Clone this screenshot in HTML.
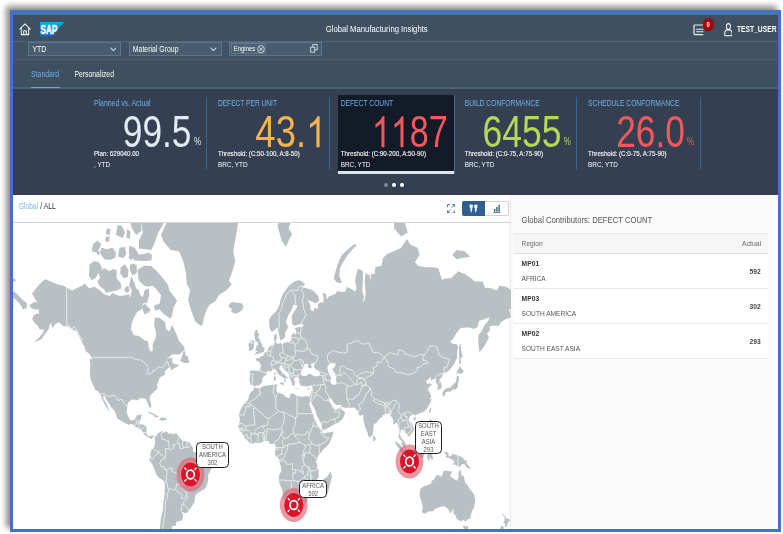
<!DOCTYPE html>
<html><head><meta charset="utf-8"><title>Global Manufacturing Insights</title>
<style>
html,body{margin:0;padding:0;background:#fff;}
body{width:783px;height:534px;overflow:hidden;position:relative;font-family:"Liberation Sans",sans-serif;}
.t{position:absolute;white-space:nowrap;line-height:1;}
.r{position:absolute;display:block;}
#sh{position:absolute;left:10px;top:10px;width:771px;height:522px;background:#fff;box-shadow:-4px -4px 6px rgba(0,0,0,.45);}
#clip{position:absolute;left:13px;top:13px;width:765px;height:516px;overflow:hidden;background:#fff;}
#in{position:absolute;left:-13px;top:-13px;width:783px;height:534px;}
#fr{position:absolute;left:10px;top:10px;width:765px;height:516px;border:3px solid #4472c4;}
</style></head><body>
<div id="sh"></div>
<div id="clip"><div id="in">
<div class="r" style="left:13px;top:13px;width:765px;height:2.2px;background:#3f7aab;"></div>
<div class="r" style="left:13px;top:15.2px;width:765px;height:26.3px;background:#3f5161;"></div>
<div class="r" style="left:13px;top:41px;width:765px;height:19.5px;background:#405263;"></div>
<div class="r" style="left:13px;top:41px;width:765px;height:0.8px;background:#52677a;"></div>
<div class="r" style="left:13px;top:59.4px;width:765px;height:0.8px;background:#455a6c;"></div>
<div class="r" style="left:13px;top:60.5px;width:765px;height:27px;background:#3e4f5f;"></div>
<div class="r" style="left:13px;top:86.7px;width:765px;height:2.0px;background:#4b6177;"></div>
<div class="r" style="left:13px;top:88.7px;width:765px;height:106.0px;background:#353f52;"></div>
<div class="r" style="left:510.7px;top:194.7px;width:268px;height:335px;background:#fafafa;box-shadow:-1px 0 2px rgba(0,0,0,.10);"></div>
<svg class="r" style="left:18.6px;top:23.3px" width="12" height="12.5" viewBox="0 0 12 12.5"><path d="M0.8 6.2 L6 0.9 L11.2 6.2 M2.3 5.2 V11.6 H9.7 V5.2 M4.7 11.6 V7.8 H7.3 V11.6" fill="none" stroke="#eef2f5" stroke-width="1.05" stroke-linejoin="round" stroke-linecap="round"/></svg>
<svg class="r" style="left:40px;top:22.3px" width="24" height="14.5" viewBox="0 0 24 14.5"><defs><linearGradient id="sg" x1="0" y1="0" x2="0" y2="1"><stop offset="0" stop-color="#00b4ee"/><stop offset="1" stop-color="#1c64b8"/></linearGradient></defs><path d="M0 0 H24 L12.2 14.5 H0 Z" fill="url(#sg)"/><text x="0.5" y="11.6" font-family="Liberation Sans, sans-serif" font-weight="bold" font-size="12.6" fill="#fff" stroke="#fff" stroke-width="0.5" textLength="16.8" lengthAdjust="spacingAndGlyphs">SAP</text></svg>
<svg class="r" style="left:693px;top:23.5px" width="14" height="12" viewBox="0 0 14 12"><path d="M12.2 3.6 V2 Q12.2 1 11.2 1 H2 Q1 1 1 2 V9.6 Q1 10.6 2 10.6 H9.8" fill="none" stroke="#e8edf1" stroke-width="1.2" stroke-linecap="round"/><path d="M3.6 5.3 H10 M3.6 7.8 H10" stroke="#e8edf1" stroke-width="1.1" stroke-linecap="round"/></svg>
<div class="r" style="left:702.8px;top:18.4px;width:10.8px;height:12.8px;border-radius:50%;background:#a60008"></div>
<svg class="r" style="left:723.6px;top:23px" width="8.8" height="13.5" viewBox="0 0 11 13.5" preserveAspectRatio="none"><ellipse cx="5.5" cy="3.6" rx="2.5" ry="3" fill="none" stroke="#fff" stroke-width="1.15"/><path d="M1 12.7 V10.2 Q1 7.2 3.6 7 H7.4 Q10 7.2 10 10.2 V12.7 Z" fill="none" stroke="#fff" stroke-width="1.15" stroke-linejoin="round"/></svg>
<div class="r" style="left:28px;top:41.6px;width:92.5px;height:14.3px;background:#485c6e;border:1px solid #5f7488;box-sizing:border-box;"></div>
<div class="r" style="left:128.5px;top:41.6px;width:93.2px;height:14.3px;background:#485c6e;border:1px solid #5f7488;box-sizing:border-box;"></div>
<div class="r" style="left:229.4px;top:41.6px;width:92.4px;height:14.3px;background:#485c6e;border:1px solid #5f7488;box-sizing:border-box;"></div>
<svg class="r" style="left:109.6px;top:46.599999999999994px" width="6.8" height="4.6" viewBox="0 0 6.8 4.6"><path d="M0.6 0.7 L3.4 3.7 L6.2 0.7" fill="none" stroke="#b9d6ee" stroke-width="1.15"/></svg>
<svg class="r" style="left:209.9px;top:46.599999999999994px" width="6.8" height="4.6" viewBox="0 0 6.8 4.6"><path d="M0.6 0.7 L3.4 3.7 L6.2 0.7" fill="none" stroke="#b9d6ee" stroke-width="1.15"/></svg>
<div class="r" style="left:231.4px;top:43.4px;width:34.5px;height:10.8px;background:#4d6275;border:1px solid #62788d;box-sizing:border-box;border-radius:1px;"></div>
<svg class="r" style="left:257px;top:44.5px" width="8" height="8.4" viewBox="0 0 8 8.4"><ellipse cx="4" cy="4.2" rx="3.3" ry="3.7" fill="none" stroke="#e6eef5" stroke-width="0.8"/><path d="M2.4 2.4 L5.6 6 M5.6 2.4 L2.4 6" stroke="#e6eef5" stroke-width="0.8"/></svg>
<svg class="r" style="left:309.5px;top:44.2px" width="8" height="9" viewBox="0 0 8 9"><rect x="2.8" y="0.6" width="4.4" height="5.2" fill="none" stroke="#cfe0ee" stroke-width="0.9"/><rect x="0.7" y="3.2" width="4" height="5" fill="#485c6e" stroke="#cfe0ee" stroke-width="0.9"/></svg>
<div class="r" style="left:31px;top:86.6px;width:28.5px;height:1.7px;background:#63aee8;"></div>
<div class="r" style="left:205.8px;top:96.5px;width:1.2px;height:73px;background:#37679a;"></div>
<div class="r" style="left:329.2px;top:96.5px;width:1.2px;height:73px;background:#37679a;"></div>
<div class="r" style="left:575.8px;top:96.5px;width:1.2px;height:73px;background:#37679a;"></div>
<div class="r" style="left:699.9px;top:96.5px;width:1.2px;height:73px;background:#37679a;"></div>
<div class="r" style="left:337.7px;top:95.2px;width:116.3px;height:75.6px;background:#131a28;"></div>
<div class="r" style="left:337.7px;top:170.8px;width:116.3px;height:3px;background:#dde6ee;"></div>
<div class="r" style="left:453.6px;top:95.2px;width:0.8px;height:78.6px;background:#3b6c9c;"></div>
<div class="r" style="left:384.3px;top:182.9px;width:3.8px;height:4.4px;border-radius:50%;background:#7d8896"></div>
<div class="r" style="left:392.1px;top:182.9px;width:3.8px;height:4.4px;border-radius:50%;background:#fff"></div>
<div class="r" style="left:399.90000000000003px;top:182.9px;width:3.8px;height:4.4px;border-radius:50%;background:#fff"></div>
<div class="r" style="left:13px;top:221.8px;width:497.7px;height:1px;background:#d4d4d4;"></div>
<svg class="r" style="left:447px;top:204px" width="8.4" height="9.4" viewBox="0 0 8.4 9.4"><path d="M0.6 3 V0.6 H3 M5.4 0.6 H7.8 V3 M7.8 6.4 V8.8 H5.4 M3 8.8 H0.6 V6.4 M7.6 0.8 L5 3.6 M0.8 8.6 L3.4 5.8" fill="none" stroke="#346187" stroke-width="0.9"/></svg>
<div class="r" style="left:462.1px;top:200.8px;width:46.5px;height:15.4px;background:#fff;border:1px solid #d2d2d2;box-sizing:border-box;border-radius:2px;"></div>
<div class="r" style="left:462.1px;top:200.8px;width:23.2px;height:15.4px;background:#2f6093;border-radius:2px 0 0 2px;"></div>
<svg class="r" style="left:469.4px;top:203.6px" width="9" height="10" viewBox="0 0 9 10"><path d="M0.6 0.6 L3.8 0.8 L3.9 3 L3.1 4.4 L3.3 5.6 L2.2 9 L1.3 5.8 L1.6 4.4 L0.6 3 Z M5.2 0.8 L8.4 0.6 L8.4 3.4 L7.6 4.6 L7.8 5.8 L6.8 9 L5.8 5.8 L6 4.4 L5.2 3.4 Z" fill="#fff"/></svg>
<svg class="r" style="left:492.5px;top:204px" width="8" height="9" viewBox="0 0 8 9"><path d="M0.4 8.4 H7.6" stroke="#346187" stroke-width="0.9"/><rect x="1" y="5" width="1.4" height="2.6" fill="#346187"/><rect x="3.2" y="3" width="1.4" height="4.6" fill="#346187"/><rect x="5.4" y="0.8" width="1.4" height="6.8" fill="#346187"/></svg>
<div class="r" style="left:514px;top:233.2px;width:254.2px;height:20.6px;background:#f6f6f6;border-top:1.5px solid #e4e4e4;border-bottom:1px solid #dedede;box-sizing:border-box;"></div>
<div class="r" style="left:514px;top:253.6px;width:254.2px;height:34.95px;background:#fff;"></div>
<div class="r" style="left:514px;top:288.1px;width:254.2px;height:1px;background:#e8e8e8;"></div>
<div class="r" style="left:514px;top:288.55px;width:254.2px;height:34.95px;background:#fff;"></div>
<div class="r" style="left:514px;top:323.05px;width:254.2px;height:1px;background:#e8e8e8;"></div>
<div class="r" style="left:514px;top:323.5px;width:254.2px;height:34.95px;background:#fff;"></div>
<div class="r" style="left:514px;top:358.0px;width:254.2px;height:1px;background:#e8e8e8;"></div>
<svg class="r" style="left:13px;top:222.8px" width="497.7" height="306.2" viewBox="13 222.8 497.7 306.2"><path d="M29.3 305.0L34.8 301.4L37.6 303.4L35.5 299.3L32.1 293.6L36.2 288.0L41.8 281.6L45.2 279.1L51.5 281.6L57.0 284.1L64.0 285.6L66.7 287.5L72.3 290.4L76.4 288.0L82.0 285.6L84.8 283.2L88.9 288.0L94.5 286.6L100.0 290.4L104.2 294.0L109.7 295.8L112.5 292.7L116.7 294.9L120.8 295.8L126.4 294.9L129.1 293.6L129.8 298.4L131.9 290.4L129.1 285.6L131.2 275.9L134.7 283.2L136.1 288.0L138.9 290.4L140.2 294.9L143.0 297.1L144.4 290.4L148.6 288.0L149.3 294.9L147.2 302.2L143.0 303.4L141.6 309.4L137.5 311.3L133.3 318.6L131.2 325.5L131.0 329.4L134.0 335.1L138.9 335.7L144.4 340.1L148.1 341.0L148.6 346.7L150.6 351.3L152.7 350.7L152.7 343.9L155.5 338.1L156.2 332.0L154.1 325.5L154.8 317.2L159.7 317.9L165.2 322.1L165.9 328.8L169.4 331.0L172.1 324.5L176.3 333.5L179.1 341.0L183.2 345.3L185.0 349.4L183.2 351.0L179.1 354.2L172.1 354.2L169.4 356.5L165.9 360.2L168.7 358.0L172.8 357.2L172.1 359.8L172.8 363.4L177.7 364.6L179.1 363.4L177.7 366.3L173.5 368.6L170.8 370.5L170.8 367.0L169.4 367.0L166.6 369.3L164.5 371.6L165.2 374.3L162.4 376.1L159.7 377.2L158.3 381.5L156.9 384.7L157.6 388.2L154.8 390.8L151.3 394.2L149.5 397.7L151.1 404.3L151.1 407.5L149.3 407.1L147.5 402.5L145.8 398.7L143.0 398.1L138.9 398.3L138.2 400.2L135.4 399.6L131.9 399.4L127.8 402.5L127.1 407.1L126.7 412.6L129.1 418.4L131.2 420.2L134.7 419.5L136.8 415.6L137.5 414.9L141.6 414.4L140.9 418.8L139.8 421.4L139.3 424.0L143.0 424.2L146.8 425.8L146.5 430.0L146.2 432.6L147.9 435.6L150.0 436.3L152.0 435.1L154.8 436.6L154.8 437.7L153.4 436.6L151.3 438.8L149.3 437.7L147.2 437.1L144.4 434.3L143.3 432.6L140.9 429.2L138.2 428.3L134.7 426.1L131.9 423.7L128.5 424.6L125.0 422.8L120.8 420.6L116.7 417.9L116.0 414.4L114.6 410.8L111.1 406.7L109.0 403.4L106.3 399.6L104.9 396.1L103.2 395.2L103.5 398.7L106.3 403.4L108.3 408.0L110.0 411.7L107.0 408.0L104.2 403.4L102.1 398.7L100.0 393.8L97.9 390.8L95.2 389.8L93.1 384.7L90.6 379.4L89.9 373.9L90.3 364.6L89.3 358.8L91.7 359.3L91.7 357.2L88.9 353.4L85.5 350.7L84.8 346.7L82.0 342.4L79.2 336.6L76.4 331.0L72.3 329.4L68.1 326.2L62.6 325.5L59.1 322.1L55.6 323.8L52.2 327.8L50.8 322.1L48.7 328.8L45.2 333.5L41.8 338.7L36.9 341.0L33.7 342.4L39.0 337.5L43.2 332.0L43.8 329.4L39.7 329.4L37.6 325.5L33.4 321.4L32.1 318.6L34.1 314.3L39.0 313.2L39.0 309.4L34.8 309.4L31.4 308.2ZM161.0 234.7L170.8 213.9L179.1 197.5L199.9 184.7L220.7 176.2L231.8 191.3L245.7 203.3L238.7 218.8L235.9 236.3L233.2 251.1L235.3 260.9L231.8 272.7L229.0 280.6L231.8 284.1L226.2 290.4L219.3 294.5L215.1 301.4L209.6 304.6L206.8 309.4L204.0 316.8L202.7 323.8L201.3 325.8L198.5 323.8L195.0 321.1L193.0 315.0L190.2 307.4L188.1 299.3L190.2 290.4L186.7 283.2L186.0 272.7L183.2 260.9L179.1 251.1L170.8 249.7L163.8 241.8ZM228.3 305.4L231.8 301.8L237.3 302.6L242.2 303.4L243.6 307.4L241.5 310.2L236.6 313.6L231.1 311.7L231.8 308.2L229.0 307.4ZM151.3 265.8L156.9 271.0L162.4 277.5L168.0 284.6L169.4 290.4L176.3 299.3L177.0 300.9L173.5 307.4L172.1 315.0L170.8 318.6L168.0 316.8L163.1 313.2L159.7 309.4L154.8 310.2L154.1 305.4L159.7 303.4L161.0 294.9L155.5 288.0L152.7 285.6L148.6 286.6L144.4 285.6L138.9 280.6L137.5 269.9L144.4 265.2ZM100.0 278.0L97.2 280.6L99.3 285.6L104.2 289.4L105.6 292.7L111.1 291.3L116.7 290.4L121.5 288.0L120.8 283.2L116.7 278.0L116.7 269.9L112.5 268.7L109.7 271.0L104.2 268.1L98.6 271.5ZM88.9 275.4L91.7 280.1L95.2 278.0L98.6 272.7L102.1 268.1L99.3 262.2L94.5 260.9L89.6 264.0ZM138.9 248.3L151.3 249.7L154.1 244.0L158.3 232.2L165.2 220.7L172.1 208.7L176.3 191.3L165.2 184.7L144.4 191.3L134.7 203.3L140.2 218.8L143.0 232.2L138.9 240.2ZM129.1 254.5L134.7 260.3L144.4 260.9L151.3 260.3L152.0 254.5L148.6 252.5L143.0 253.8L138.9 254.5L134.7 247.6L129.1 245.5ZM129.1 218.8L131.9 228.0L136.1 234.7L141.6 230.5L140.2 218.8L136.1 208.7L130.5 208.7ZM100.0 252.5L104.2 259.0L109.7 259.7L115.3 257.8L116.0 252.5L112.5 247.6L107.0 249.0L101.4 247.6ZM120.1 272.7L123.6 278.0L127.8 277.0L128.5 269.9L125.0 264.0L120.8 267.0ZM129.8 269.9L132.6 275.4L136.8 272.7L136.8 265.2L133.3 263.4L130.1 264.6ZM141.6 306.2L144.4 314.3L148.6 312.4L151.1 309.4L147.2 306.2L145.1 303.4ZM118.1 256.5L123.6 257.8L126.4 253.8L125.0 246.9L119.4 247.6ZM91.7 251.1L97.2 252.5L101.4 244.0L97.2 240.2L93.1 244.0ZM124.3 290.4L127.1 292.7L129.8 290.4L128.5 286.1L125.7 286.6ZM180.1 360.7L184.6 362.7L188.8 362.9L189.2 360.7L188.1 358.5L188.1 356.5L185.3 354.7L185.3 350.7L183.2 352.1L181.9 356.0ZM144.7 413.7L148.6 411.7L152.0 412.6L155.5 414.5L159.2 416.7L155.1 417.0L154.1 415.4L150.6 413.5L147.9 412.6ZM159.2 419.7L161.0 417.4L165.2 417.6L167.3 419.5L164.5 419.9L162.9 420.6ZM154.8 436.6L156.9 435.3L157.6 433.3L159.4 432.3L162.4 430.6L163.4 432.6L165.2 431.7L165.2 430.6L167.3 432.1L168.0 433.4L170.8 433.3L173.5 433.8L176.3 433.1L177.7 435.1L179.1 436.8L181.2 439.3L183.2 441.0L186.0 441.0L188.8 441.8L190.9 443.7L193.0 448.0L193.0 451.0L195.0 452.3L196.4 452.0L199.9 453.5L201.3 455.2L204.7 455.8L206.8 455.7L208.9 457.2L211.0 459.2L213.3 459.7L214.0 463.0L213.8 466.0L211.0 469.4L209.6 472.5L208.2 474.5L208.2 479.7L207.2 484.1L205.7 487.6L204.3 489.4L202.0 490.3L199.9 491.8L197.8 492.5L195.7 494.5L194.9 497.3L194.8 500.5L193.0 504.3L190.9 507.2L188.8 510.2L188.1 511.8L186.0 513.0L183.2 512.2L181.4 511.2L183.2 515.3L182.5 519.4L180.5 520.9L176.3 521.5L175.9 525.5L172.1 525.9L172.1 529.2L173.9 528.8L171.7 531.5L171.5 535.0L168.7 537.4L170.8 540.5L170.8 542.2L168.0 547.3L166.6 551.3L167.4 553.7L163.8 557.6L167.3 558.1L171.9 560.1L169.4 561.9L165.2 561.0L161.0 556.7L158.3 551.3L157.6 542.2L159.0 537.4L160.4 532.7L159.7 528.1L160.4 523.7L160.8 518.4L161.7 514.2L163.1 509.2L163.1 503.3L164.5 495.8L164.9 488.5L164.8 482.1L162.4 479.7L158.3 477.1L156.5 474.5L155.2 471.1L153.4 466.9L151.6 462.7L149.7 461.0L149.5 458.5L151.3 456.5L150.1 454.7L150.6 452.7L151.3 450.7L151.3 449.3L153.0 448.5L154.8 445.2L155.1 442.7L154.8 439.3L154.3 438.8ZM254.1 387.2L259.5 388.4L263.7 385.7L269.2 385.1L274.8 384.3L276.4 384.0L277.6 385.1L276.4 387.8L276.4 390.8L277.6 392.4L280.3 393.0L283.5 394.2L285.9 396.7L288.7 398.1L290.0 396.7L290.0 393.8L292.8 393.0L295.6 394.8L297.0 395.6L300.4 396.3L302.5 396.9L305.3 395.7L307.1 396.3L309.7 396.1L310.6 399.8L309.7 402.8L308.8 402.5L310.2 406.2L311.5 409.9L312.2 412.6L313.6 415.3L314.0 418.8L315.7 420.6L317.1 424.9L319.2 426.6L321.2 429.5L322.4 430.4L322.4 431.7L324.0 433.6L327.5 432.3L330.3 432.1L333.5 431.2L333.2 433.6L331.6 437.7L330.3 441.0L328.9 443.5L326.1 446.8L323.3 449.3L320.6 452.7L319.2 454.3L317.8 456.8L316.8 459.3L316.1 461.8L317.1 464.3L317.1 467.7L318.5 468.9L318.5 472.8L318.8 476.2L317.1 479.2L313.6 481.1L311.3 484.6L310.6 485.0L311.5 488.5L311.5 492.1L308.1 494.9L307.8 497.7L307.4 500.5L305.3 503.3L303.9 505.9L301.1 509.2L298.4 511.0L295.6 511.2L292.8 511.6L290.0 512.8L288.0 511.6L287.7 508.6L287.3 506.3L285.2 500.7L283.1 496.7L282.4 490.3L281.0 486.7L278.9 481.4L278.7 478.0L279.6 473.7L281.3 471.1L281.0 466.9L279.4 461.0L278.7 458.5L275.5 455.2L274.8 452.2L275.5 449.3L275.9 446.0L275.2 444.3L274.1 443.3L272.0 443.7L269.9 443.7L268.5 440.7L265.8 440.5L263.7 441.0L260.9 442.3L259.5 443.0L258.1 442.7L255.4 442.3L251.9 443.7L249.8 442.7L247.0 439.8L245.0 438.5L243.9 436.0L241.8 432.9L240.8 431.7L239.0 430.0L239.0 428.3L238.0 426.3L239.4 424.0L239.7 420.6L239.8 417.9L238.7 415.3L240.1 410.8L241.8 407.1L244.3 403.0L247.0 400.9L248.4 399.0L248.8 396.7L249.5 393.8L251.9 391.4L253.3 389.8ZM330.7 471.1L332.1 477.1L331.0 479.7L330.3 483.2L328.9 488.5L327.5 494.0L324.7 494.9L322.9 491.2L322.4 487.6L323.7 485.0L323.3 480.6L324.0 478.3L326.8 477.1L328.9 473.7ZM254.5 386.7L253.4 385.1L252.0 384.3L250.0 384.7L250.1 381.5L249.1 381.1L249.8 378.3L250.1 374.3L249.5 371.6L251.2 370.0L254.7 370.3L257.4 370.5L259.8 370.7L260.6 367.9L260.8 364.6L259.2 361.7L256.1 360.0L255.8 358.5L258.1 357.7L260.1 358.0L259.8 355.5L260.6 356.2L262.6 356.0L264.4 354.2L264.5 352.3L267.2 351.0L268.1 348.9L269.0 346.7L271.3 345.3L273.7 345.0L274.5 343.9L274.2 339.5L273.7 335.1L275.5 334.4L277.0 332.9L276.6 336.6L277.4 337.2L276.2 340.1L275.8 341.6L277.3 343.9L278.9 343.3L281.0 342.7L282.1 344.1L285.2 342.4L288.0 341.6L289.3 342.7L290.0 341.3L291.4 339.5L291.4 335.1L293.5 332.9L296.0 334.4L296.1 331.0L294.9 328.1L298.4 326.8L301.1 327.1L303.9 325.5L301.8 323.5L298.4 324.2L294.2 325.8L292.1 323.5L291.8 318.6L291.8 315.0L296.3 308.2L297.4 305.4L293.5 304.2L291.8 309.4L288.7 314.3L286.3 320.4L286.2 323.1L288.4 326.2L287.3 329.1L285.3 332.3L285.0 336.6L284.1 337.8L282.1 339.5L280.2 339.8L279.6 337.2L278.7 332.9L277.8 328.8L276.9 327.1L275.5 329.1L272.0 332.0L270.1 329.4L269.2 324.8L269.2 319.3L271.3 315.8L274.5 312.8L277.3 309.4L279.6 304.2L280.6 299.3L283.1 293.6L286.6 288.5L289.3 285.1L294.2 281.6L297.9 280.1L301.1 280.6L305.3 284.1L302.5 286.6L308.1 288.5L312.2 289.9L318.5 295.8L319.2 300.5L315.7 303.0L310.2 300.9L307.4 299.3L310.2 304.2L310.6 309.4L313.6 311.3L314.7 307.4L317.8 309.0L317.8 304.2L320.6 301.8L323.3 302.6L323.6 297.1L322.6 292.2L326.1 294.0L326.8 299.3L328.9 296.2L335.8 293.6L337.2 290.8L342.1 291.7L345.5 291.3L346.9 286.6L351.8 289.0L355.2 291.3L356.6 288.0L355.0 280.6L357.3 269.9L359.4 268.7L362.9 271.0L362.9 280.6L362.2 290.4L364.2 297.1L362.2 302.2L364.9 299.3L365.6 291.3L364.7 281.6L365.6 272.7L369.8 275.4L370.5 280.6L371.2 273.8L374.6 273.8L375.3 267.0L381.6 265.2L383.0 257.8L387.1 253.8L394.1 251.1L401.0 247.6L407.0 238.7L410.0 244.0L417.6 247.6L419.7 254.5L414.9 262.2L418.3 265.8L426.0 267.0L433.6 267.0L438.4 268.1L441.9 279.6L446.8 278.0L450.9 278.0L456.5 272.7L457.9 271.0L464.8 273.8L471.0 278.0L474.5 281.1L482.8 281.6L484.9 287.5L491.2 288.0L496.7 290.4L499.5 285.6L506.4 286.6L512.0 290.4L516.1 293.6L521.7 299.3L526.2 303.0L526.1 307.8L522.4 309.4L518.9 303.4L515.4 299.7L512.8 297.5L512.5 307.4L510.6 309.4L508.5 308.6L511.0 315.0L510.6 317.2L505.0 319.3L500.9 322.1L498.8 325.5L492.5 325.5L489.1 326.2L490.5 328.8L488.4 332.0L487.0 332.6L488.8 337.5L487.0 341.0L484.2 346.1L481.9 349.4L479.6 352.1L478.7 346.7L478.3 341.0L478.3 335.1L481.4 331.3L484.2 325.5L485.6 323.8L488.4 320.4L489.8 316.8L484.2 319.3L479.4 320.4L477.3 327.1L473.1 328.8L469.0 327.1L460.6 327.8L456.5 332.9L453.0 338.7L450.2 341.9L453.0 343.9L456.5 343.9L458.3 346.7L457.2 352.1L457.2 357.2L454.4 363.4L450.9 368.2L446.8 372.1L444.0 372.5L442.3 375.0L441.9 377.2L439.1 379.4L440.5 381.9L441.8 384.7L441.6 387.8L439.1 389.4L437.5 389.8L437.8 386.7L438.2 384.7L435.7 382.6L436.1 379.4L434.7 378.3L430.8 380.5L430.8 376.5L427.4 380.0L425.7 380.5L426.7 382.6L427.4 384.0L429.8 383.0L432.2 384.0L430.1 385.7L427.8 388.8L429.4 391.8L431.2 395.2L431.2 397.1L429.4 398.1L431.5 399.0L430.8 401.9L428.7 405.3L427.4 407.7L425.3 410.2L423.2 411.9L420.4 412.8L417.0 414.4L415.3 414.7L415.3 416.5L414.5 414.4L412.5 414.2L410.3 415.8L408.9 418.8L410.0 421.4L412.5 424.0L413.8 428.3L413.8 430.9L411.4 433.4L410.3 435.1L407.9 436.5L407.7 434.3L405.2 432.3L404.2 430.6L402.4 429.5L401.7 428.3L401.0 430.9L400.0 433.4L400.3 435.6L401.7 438.5L403.1 439.7L404.5 441.0L405.7 443.5L405.9 446.3L406.8 448.7L405.7 448.7L403.1 446.5L401.7 444.3L401.4 441.3L400.3 439.3L398.6 437.7L398.8 435.1L399.2 431.7L398.9 429.2L397.9 425.8L397.7 423.2L396.1 422.6L394.5 424.4L393.1 423.7L393.4 420.6L392.0 417.4L390.3 415.3L389.5 412.6L387.8 413.5L385.7 413.8L383.0 414.7L382.3 417.0L380.2 417.9L378.1 420.6L376.5 422.6L373.7 424.4L373.5 428.3L373.1 431.7L373.0 433.8L371.9 435.5L370.8 436.1L369.8 437.5L368.4 436.0L367.3 431.7L366.0 429.2L364.9 425.8L364.0 422.3L363.3 418.8L363.3 415.3L362.9 414.4L360.8 415.6L359.4 415.3L358.0 412.9L359.8 411.7L357.3 410.8L355.6 408.9L354.5 407.3L351.1 407.5L347.6 407.7L344.1 407.3L341.8 406.7L341.1 404.3L338.6 404.9L336.5 404.7L333.7 402.6L332.3 399.6L330.3 397.9L328.9 398.7L329.6 401.5L331.0 403.8L331.9 405.3L332.8 408.0L333.9 406.6L333.7 408.8L335.1 409.5L337.2 409.5L340.0 407.1L340.5 405.6L340.7 408.9L343.4 410.6L345.2 412.6L343.7 416.2L342.5 418.8L340.0 420.7L338.6 422.3L334.4 424.0L330.3 426.6L324.7 429.5L322.6 429.7L321.7 426.6L321.5 423.5L319.2 419.7L316.7 415.3L315.7 410.8L313.9 407.1L311.5 402.8L310.6 399.8L309.7 396.1L310.8 393.2L312.0 388.8L312.2 385.3L310.2 385.3L307.4 386.5L304.6 385.7L302.5 385.9L300.4 385.1L299.1 381.9L299.5 379.4L298.6 378.3L298.4 376.5L295.6 376.5L294.9 377.9L293.9 377.4L293.8 379.8L295.6 382.2L294.5 382.8L294.5 385.7L293.4 385.7L292.4 385.1L291.7 383.0L291.4 380.9L290.0 378.7L289.2 377.2L289.3 374.3L288.0 372.8L285.9 371.2L283.8 369.3L282.4 366.5L281.3 365.6L279.4 366.3L279.5 368.9L281.2 370.5L282.4 373.2L284.5 374.3L288.0 377.9L287.8 378.7L285.9 377.2L285.2 378.9L286.0 380.5L285.2 381.7L284.1 382.8L284.5 381.1L284.1 378.3L282.4 376.8L279.6 375.0L277.6 373.0L276.6 370.5L274.5 368.4L272.7 369.8L270.6 371.4L268.5 370.7L266.7 371.2L266.7 373.9L265.1 375.4L263.0 377.0L261.9 379.4L262.6 381.1L261.3 383.0L259.5 385.1L256.1 385.3ZM-244.8 386.7L-245.9 385.1L-247.3 384.3L-249.4 384.7L-249.2 381.5L-250.2 381.1L-249.5 378.3L-249.2 374.3L-249.8 371.6L-248.1 370.0L-244.6 370.3L-241.9 370.5L-239.5 370.7L-238.7 367.9L-238.5 364.6L-240.1 361.7L-243.3 360.0L-243.5 358.5L-241.2 357.7L-239.2 358.0L-239.5 355.5L-238.7 356.2L-236.7 356.0L-234.9 354.2L-234.8 352.3L-232.2 351.0L-231.2 348.9L-230.4 346.7L-228.0 345.3L-225.6 345.0L-224.8 343.9L-225.1 339.5L-225.6 335.1L-223.8 334.4L-222.3 332.9L-222.7 336.6L-221.9 337.2L-223.1 340.1L-223.6 341.6L-222.0 343.9L-220.4 343.3L-218.3 342.7L-217.2 344.1L-214.1 342.4L-211.4 341.6L-210.0 342.7L-209.3 341.3L-207.9 339.5L-207.9 335.1L-205.8 332.9L-203.3 334.4L-203.2 331.0L-204.4 328.1L-201.0 326.8L-198.2 327.1L-195.4 325.5L-197.5 323.5L-201.0 324.2L-205.1 325.8L-207.2 323.5L-207.5 318.6L-207.5 315.0L-203.0 308.2L-201.9 305.4L-205.8 304.2L-207.5 309.4L-210.7 314.3L-213.0 320.4L-213.2 323.1L-210.9 326.2L-212.1 329.1L-214.0 332.3L-214.3 336.6L-215.2 337.8L-217.2 339.5L-219.1 339.8L-219.7 337.2L-220.7 332.9L-221.5 328.8L-222.5 327.1L-223.8 329.1L-227.3 332.0L-229.3 329.4L-230.1 324.8L-230.1 319.3L-228.0 315.8L-224.8 312.8L-222.0 309.4L-219.7 304.2L-218.7 299.3L-216.2 293.6L-212.7 288.5L-210.0 285.1L-205.1 281.6L-201.4 280.1L-198.2 280.6L-194.0 284.1L-196.8 286.6L-191.2 288.5L-187.1 289.9L-180.8 295.8L-180.2 300.5L-183.6 303.0L-189.2 300.9L-191.9 299.3L-189.2 304.2L-188.8 309.4L-185.7 311.3L-184.6 307.4L-181.5 309.0L-181.5 304.2L-178.8 301.8L-176.0 302.6L-175.7 297.1L-176.7 292.2L-173.2 294.0L-172.5 299.3L-170.4 296.2L-163.5 293.6L-162.1 290.8L-157.3 291.7L-153.8 291.3L-152.4 286.6L-147.6 289.0L-144.1 291.3L-142.7 288.0L-144.4 280.6L-142.0 269.9L-139.9 268.7L-136.5 271.0L-136.5 280.6L-137.2 290.4L-135.1 297.1L-137.2 302.2L-134.4 299.3L-133.7 291.3L-134.7 281.6L-133.7 272.7L-129.5 275.4L-128.8 280.6L-128.1 273.8L-124.7 273.8L-124.0 267.0L-117.7 265.2L-116.4 257.8L-112.2 253.8L-105.3 251.1L-98.3 247.6L-92.4 238.7L-89.3 244.0L-81.7 247.6L-79.6 254.5L-84.4 262.2L-81.0 265.8L-73.4 267.0L-65.7 267.0L-60.9 268.1L-57.4 279.6L-52.5 278.0L-48.4 278.0L-42.8 272.7L-41.5 271.0L-34.5 273.8L-28.3 278.0L-24.8 281.1L-16.5 281.6L-14.4 287.5L-8.2 288.0L-2.6 290.4L0.2 285.6L7.1 286.6L12.6 290.4L16.8 293.6L22.3 299.3L26.9 303.0L26.8 307.8L23.0 309.4L19.6 303.4L16.1 299.7L13.5 297.5L13.2 307.4L11.3 309.4L9.2 308.6L11.7 315.0L11.3 317.2L5.7 319.3L1.5 322.1L-0.5 325.5L-6.8 325.5L-10.2 326.2L-8.9 328.8L-10.9 332.0L-12.3 332.6L-10.5 337.5L-12.3 341.0L-15.1 346.1L-17.5 349.4L-19.7 352.1L-20.6 346.7L-21.1 341.0L-21.1 335.1L-17.9 331.3L-15.1 325.5L-13.7 323.8L-10.9 320.4L-9.6 316.8L-15.1 319.3L-20.0 320.4L-22.0 327.1L-26.2 328.8L-30.4 327.1L-38.7 327.8L-42.8 332.9L-46.3 338.7L-49.1 341.9L-46.3 343.9L-42.8 343.9L-41.0 346.7L-42.1 352.1L-42.1 357.2L-44.9 363.4L-48.4 368.2L-52.5 372.1L-55.3 372.5L-57.0 375.0L-57.4 377.2L-60.2 379.4L-58.8 381.9L-57.5 384.7L-57.7 387.8L-60.2 389.4L-61.8 389.8L-61.6 386.7L-61.1 384.7L-63.6 382.6L-63.2 379.4L-64.6 378.3L-68.5 380.5L-68.5 376.5L-72.0 380.0L-73.6 380.5L-72.7 382.6L-72.0 384.0L-69.5 383.0L-67.1 384.0L-69.2 385.7L-71.6 388.8L-69.9 391.8L-68.1 395.2L-68.1 397.1L-69.9 398.1L-67.8 399.0L-68.5 401.9L-70.6 405.3L-72.0 407.7L-74.0 410.2L-76.1 411.9L-78.9 412.8L-82.4 414.4L-84.0 414.7L-84.0 416.5L-84.9 414.4L-86.8 414.2L-89.0 415.8L-90.4 418.8L-89.3 421.4L-86.8 424.0L-85.6 428.3L-85.6 430.9L-87.9 433.4L-89.0 435.1L-91.4 436.5L-91.7 434.3L-94.2 432.3L-95.1 430.6L-96.9 429.5L-97.6 428.3L-98.3 430.9L-99.3 433.4L-99.0 435.6L-97.6 438.5L-96.2 439.7L-94.9 441.0L-93.6 443.5L-93.5 446.3L-92.5 448.7L-93.6 448.7L-96.2 446.5L-97.6 444.3L-97.9 441.3L-99.0 439.3L-100.7 437.7L-100.5 435.1L-100.1 431.7L-100.4 429.2L-101.4 425.8L-101.6 423.2L-103.2 422.6L-104.8 424.4L-106.2 423.7L-105.9 420.6L-107.3 417.4L-109.0 415.3L-109.8 412.6L-111.5 413.5L-113.6 413.8L-116.4 414.7L-117.0 417.0L-119.1 417.9L-121.2 420.6L-122.9 422.6L-125.6 424.4L-125.8 428.3L-126.2 431.7L-126.3 433.8L-127.4 435.5L-128.6 436.1L-129.5 437.5L-130.9 436.0L-132.0 431.7L-133.3 429.2L-134.4 425.8L-135.4 422.3L-136.0 418.8L-136.0 415.3L-136.5 414.4L-138.5 415.6L-139.9 415.3L-141.3 412.9L-139.5 411.7L-142.0 410.8L-143.7 408.9L-144.8 407.3L-148.3 407.5L-151.7 407.7L-155.2 407.3L-157.5 406.7L-158.2 404.3L-160.7 404.9L-162.8 404.7L-165.6 402.6L-167.0 399.6L-169.1 397.9L-170.4 398.7L-169.8 401.5L-168.4 403.8L-167.4 405.3L-166.6 408.0L-165.5 406.6L-165.6 408.8L-164.2 409.5L-162.1 409.5L-159.3 407.1L-158.8 405.6L-158.7 408.9L-155.9 410.6L-154.1 412.6L-155.6 416.2L-156.9 418.8L-159.3 420.7L-160.7 422.3L-164.9 424.0L-169.1 426.6L-174.6 429.5L-176.7 429.7L-177.7 426.6L-177.8 423.5L-180.2 419.7L-182.6 415.3L-183.6 410.8L-185.4 407.1L-187.8 402.8L-188.8 399.8L-189.6 396.1L-188.5 393.2L-187.4 388.8L-187.1 385.3L-189.2 385.3L-191.9 386.5L-194.7 385.7L-196.8 385.9L-198.9 385.1L-200.3 381.9L-199.8 379.4L-200.7 378.3L-201.0 376.5L-203.7 376.5L-204.4 377.9L-205.4 377.4L-205.5 379.8L-203.7 382.2L-204.8 382.8L-204.8 385.7L-206.0 385.7L-206.9 385.1L-207.6 383.0L-207.9 380.9L-209.3 378.7L-210.1 377.2L-210.0 374.3L-211.4 372.8L-213.4 371.2L-215.5 369.3L-216.9 366.5L-218.0 365.6L-220.0 366.3L-219.8 368.9L-218.2 370.5L-216.9 373.2L-214.8 374.3L-211.4 377.9L-211.5 378.7L-213.4 377.2L-214.1 378.9L-213.3 380.5L-214.1 381.7L-215.2 382.8L-214.8 381.1L-215.2 378.3L-216.9 376.8L-219.7 375.0L-221.8 373.0L-222.7 370.5L-224.8 368.4L-226.6 369.8L-228.7 371.4L-230.8 370.7L-232.6 371.2L-232.6 373.9L-234.2 375.4L-236.3 377.0L-237.4 379.4L-236.7 381.1L-238.0 383.0L-239.8 385.1L-243.3 385.3ZM254.4 354.4L257.4 353.9L260.2 352.9L264.1 351.5L264.7 347.5L262.7 346.7L262.0 343.9L260.2 341.0L259.2 338.1L257.9 337.8L259.5 333.2L257.4 332.9L258.0 330.1L255.4 330.1L254.3 333.5L254.7 337.2L255.4 339.5L255.6 341.6L257.9 341.6L258.1 344.7L256.1 346.1L256.3 348.0L255.1 349.9L257.4 351.0L258.1 351.3L256.1 352.1ZM248.4 350.5L251.2 350.2L253.6 348.9L254.0 345.3L254.4 341.9L253.6 340.4L250.9 340.4L250.5 342.7L248.4 343.3L248.7 345.8L249.1 348.0ZM279.6 382.6L283.9 382.2L283.4 385.3L279.6 383.4ZM273.7 380.5L273.8 376.5L275.1 375.7L275.9 377.2L275.6 380.0L274.1 380.7ZM274.2 372.8L275.3 371.6L275.5 373.9L275.1 375.2L274.2 374.3ZM294.9 387.8L298.8 388.2L298.6 388.8L295.0 388.4ZM307.1 388.8L310.3 387.4L309.5 389.0L307.8 389.6ZM442.3 392.8L443.0 396.3L444.7 395.7L445.4 392.4L447.5 391.8L448.9 391.4L450.2 391.8L452.0 389.8L454.4 389.4L456.2 388.8L457.6 387.4L457.9 383.6L459.0 379.4L458.6 375.4L456.9 376.1L456.5 378.7L455.8 381.9L453.0 384.7L451.9 385.1L450.9 387.4L446.8 387.8L444.0 390.0ZM456.5 375.0L457.9 372.8L461.1 373.9L464.1 370.9L462.4 369.3L459.3 365.8L458.6 369.3L456.9 371.6ZM459.3 364.6L461.3 362.7L460.6 357.2L462.7 357.2L461.1 349.4L460.6 343.0L459.3 345.3L459.0 352.1L459.3 359.8ZM429.0 411.7L430.1 407.7L431.4 408.0L430.8 410.8L429.8 413.5ZM413.1 418.4L414.2 417.0L416.3 417.4L415.6 419.3L414.2 420.2ZM373.0 437.7L373.5 434.8L375.1 436.8L375.8 439.3L374.6 440.7L373.5 441.0ZM394.5 441.8L397.5 442.3L401.4 446.0L403.5 448.2L405.9 451.0L407.2 453.5L409.3 456.0L409.0 460.7L407.2 460.2L404.2 457.7L401.7 453.5L399.2 448.5L396.8 445.2ZM408.2 462.3L410.0 461.0L412.8 462.2L416.0 461.7L418.6 462.7L421.1 464.0L421.0 465.4L416.3 464.9L412.1 464.0L410.0 463.3ZM413.5 448.5L414.9 448.2L416.7 446.8L419.0 445.7L421.1 443.0L423.2 441.0L424.6 439.3L425.7 440.5L427.6 442.3L426.0 443.8L425.7 446.0L427.4 449.3L425.3 450.2L425.3 452.7L423.9 455.2L423.2 457.7L421.1 457.7L419.0 456.3L417.0 456.0L415.1 455.7L414.9 453.2L413.5 451.0ZM428.0 460.2L429.4 460.2L429.2 456.0L430.8 458.5L432.2 459.7L433.2 457.7L431.5 454.3L433.3 452.7L430.8 452.7L429.4 450.2L431.5 449.3L434.3 449.7L436.0 448.5L435.0 448.2L430.1 448.8L428.7 449.7L428.5 451.8L427.8 454.3L427.1 456.0ZM444.0 452.3L446.1 451.7L448.2 452.3L448.6 455.2L449.5 456.5L451.6 454.7L453.7 453.7L457.9 455.3L462.7 457.3L464.5 459.8L467.3 461.0L466.2 462.3L468.3 465.2L471.0 468.2L469.0 468.2L466.2 466.9L464.8 464.3L462.7 463.8L461.3 464.9L460.6 466.4L457.9 466.2L455.1 464.3L453.7 464.9L453.3 462.7L454.8 462.3L453.7 460.2L450.9 458.7L447.5 457.3L446.5 457.7L445.4 455.7L447.5 454.8L445.4 454.3ZM429.4 419.7L431.8 419.7L431.9 423.2L430.8 425.8L431.9 427.5L434.3 427.8L434.3 429.9L432.2 428.3L430.1 428.0L429.4 426.6L428.7 424.0ZM431.5 439.3L433.6 436.8L436.4 434.8L437.8 438.5L437.1 440.5L436.1 441.5L434.3 440.2L433.6 438.3ZM431.5 431.2L433.2 431.7L434.6 432.3L436.4 430.0L436.5 432.6L435.4 434.3L433.3 435.6L432.2 434.3ZM420.7 488.2L423.9 486.0L427.4 485.0L430.8 483.6L431.8 481.4L431.9 479.7L433.6 480.2L434.3 478.5L436.4 475.4L438.4 474.5L440.1 476.1L441.9 476.1L442.6 473.7L443.3 471.6L445.4 469.7L446.8 470.8L450.2 471.1L452.3 471.4L450.9 473.7L450.2 476.1L452.3 477.6L455.1 479.4L457.5 480.6L458.6 476.2L458.8 472.5L459.9 468.9L461.3 472.0L461.3 474.9L463.8 476.2L464.8 480.6L465.2 483.0L467.6 485.0L469.7 488.5L471.5 490.9L474.2 494.3L474.8 497.7L475.3 500.9L474.5 505.3L473.5 508.4L472.0 511.2L470.8 515.3L470.4 518.4L467.6 519.2L465.4 521.5L463.4 519.8L461.3 521.1L458.6 520.1L456.5 518.4L455.8 515.3L454.0 514.4L454.4 512.8L453.4 513.6L453.4 508.4L450.9 512.6L450.2 512.8L448.2 508.8L444.7 506.3L441.2 506.4L437.1 507.8L434.3 509.2L433.6 511.0L428.7 511.0L426.0 513.2L423.2 513.0L421.8 511.8L422.8 507.2L421.8 503.3L420.7 498.6L419.7 495.8L419.7 493.1L420.0 489.8ZM463.0 525.2L465.5 526.1L468.0 525.7L467.9 528.6L466.9 531.1L464.8 531.7L463.8 529.2ZM501.8 512.0L504.1 514.8L505.7 516.9L506.4 518.6L509.2 518.6L509.7 520.5L507.8 522.2L507.5 524.8L505.4 527.2L504.7 526.6L505.3 524.1L503.4 522.2L504.6 520.5L504.7 517.3L502.3 513.6ZM2.5 512.0L4.7 514.8L6.4 516.9L7.1 518.6L9.9 518.6L10.4 520.5L8.5 522.2L8.2 524.8L6.1 527.2L5.4 526.6L6.0 524.1L4.0 522.2L5.3 520.5L5.4 517.3L2.9 513.6ZM501.8 524.8L504.1 527.4L502.3 531.5L499.5 533.8L498.8 537.4L493.9 537.8L493.2 536.2L496.7 531.5L500.2 528.1ZM277.6 226.2L281.7 240.2L285.9 246.9L288.7 240.2L292.1 233.9L288.7 228.0L291.4 218.8L299.7 216.9L287.3 213.9L278.9 220.7ZM333.7 278.0L336.5 282.2L342.1 282.7L339.3 275.4L340.0 268.1L342.7 262.8L346.9 255.8L352.5 249.0L357.3 244.7L353.8 244.0L348.3 249.0L342.7 253.8L339.3 259.7L336.5 268.1L334.4 275.4ZM394.1 228.0L401.0 236.3L407.9 232.2L405.2 223.5L398.2 213.9L394.1 218.8ZM452.3 254.5L456.5 259.0L462.0 257.8L470.4 256.5L464.8 251.1L456.5 249.7ZM509.9 280.6L514.0 278.0L515.4 280.6L512.0 281.6ZM10.6 280.6L14.7 278.0L16.1 280.6L12.6 281.6ZM105.6 233.9L109.7 234.7L110.4 228.8L107.0 228.0ZM104.9 241.0L109.0 241.8L109.7 236.3L106.3 236.3ZM116.0 234.7L122.9 237.9L125.0 232.2L121.5 225.3L117.4 225.3ZM126.4 237.9L129.8 238.7L130.5 231.4L127.1 228.8ZM128.5 257.8L131.9 259.7L132.6 254.5L129.8 253.2ZM96.6 253.8L99.3 255.2L99.6 251.1L97.2 250.4Z" fill="#b9c0c4" stroke="none"/><path d="M302.5 375.7L306.0 375.7L308.8 373.9L310.8 373.9L312.9 375.4L315.0 376.1L317.8 376.1L319.9 375.0L319.9 372.8L317.8 370.5L315.0 368.2L313.6 366.3L315.0 363.4L316.8 361.7L313.6 362.7L310.8 363.9L311.5 366.1L312.9 366.3L311.5 367.5L309.5 368.4L307.4 366.3L308.8 364.6L306.7 363.4L304.9 363.7L303.5 366.3L302.1 369.3L301.1 370.9L300.9 372.8L301.4 375.0ZM327.5 365.8L330.3 363.4L333.0 362.7L335.8 363.4L335.1 366.3L333.0 368.2L332.1 368.6L333.7 371.2L335.1 372.8L335.1 375.0L336.8 376.5L335.8 379.4L336.9 383.6L334.4 385.1L331.6 383.8L330.3 381.5L331.0 377.6L329.6 374.3L328.2 371.6L327.5 368.2Z" fill="#fff"/><path d="M66.7 287.5L66.7 324.5L69.5 325.5L71.6 329.1L74.4 326.5L77.1 330.4L79.9 336.6L82.0 338.7L81.3 341.6M91.7 357.2L130.3 357.2L130.8 356.5L134.7 358.8L138.2 359.8L139.7 359.0L144.7 362.7L146.5 364.6L147.9 366.3L148.0 371.6L147.0 373.4L147.9 374.6L152.7 372.1L152.7 370.5L156.2 369.3L158.3 367.0L163.1 367.0L164.1 366.1L165.2 363.4L166.3 361.2L168.0 361.5L168.3 365.1L169.4 367.0M99.9 393.8L103.2 393.4L108.3 396.1L112.2 396.1L112.2 395.2L114.6 395.2L117.4 399.4L119.4 400.6L120.3 399.0L122.2 399.6L124.3 403.4L127.5 406.4M134.4 426.6L134.7 424.9L135.4 424.0L136.8 423.9L136.1 422.0L136.1 420.9L138.6 420.9L139.8 419.7M138.6 420.9L138.6 424.0L139.0 424.2M140.0 424.6L138.4 426.8L137.3 427.8M138.4 426.8L140.5 428.5M146.9 425.8L144.4 426.6L141.9 428.7L141.1 429.4M146.2 432.8L143.4 432.4M147.7 435.0L147.3 437.5M154.9 436.5L154.3 439.0M163.4 431.2L161.7 432.6L161.0 435.5L161.9 437.0L162.4 439.3L165.2 439.3L165.9 440.8L168.7 440.7L168.3 443.5L169.0 445.3L169.4 449.0M169.4 449.0L165.5 448.2L165.9 449.8L165.2 451.3L166.0 453.2L165.3 458.0M165.3 458.0L162.4 455.0L160.8 454.8L159.0 451.8L157.9 451.2M157.9 451.2L156.2 450.5L154.1 449.5L153.0 448.7M157.9 451.2L157.6 453.5L154.4 456.0L153.4 458.5L152.0 459.3L150.9 458.3L150.9 456.7M165.3 458.0L161.2 459.7L159.8 463.2L161.3 466.7L164.5 466.9L164.4 469.4L165.8 469.2M165.8 469.2L167.0 472.0L166.6 475.4L166.0 477.1L166.6 478.8L165.9 480.6M165.9 480.6L164.7 482.0M165.9 480.6L167.3 484.1L167.7 487.6L169.1 490.0M165.8 469.2L167.3 469.4L171.7 467.4L171.7 470.8L175.6 472.8L178.4 474.2L178.8 478.3L181.4 478.5L182.5 481.4L181.9 484.6M181.9 484.6L180.5 483.7L176.6 484.3L175.5 488.9M175.5 488.9L173.1 490.0L171.9 488.7L170.3 488.2L169.1 490.0M169.1 490.0L167.3 493.6L167.6 497.7L165.6 500.5L165.2 505.3L165.2 509.8L164.5 515.3L163.8 520.5L162.9 525.9L162.9 532.7L162.4 539.8L161.0 547.3L162.0 551.8L167.4 553.4M181.9 484.6L182.1 488.7L185.0 489.2L185.5 492.1L187.0 492.1L186.6 495.1M175.5 488.9L177.7 491.8L181.9 494.2L182.4 494.9L181.0 498.0L183.9 498.4L184.9 498.2L186.6 495.1M186.6 495.1L187.7 497.1L187.7 498.0L184.9 500.3L182.4 503.7M182.4 503.7L181.6 507.2L181.3 511.0M182.4 503.7L184.6 504.9L186.7 506.8L188.2 509.0L188.2 510.6M179.1 437.0L177.3 441.0L178.1 442.3M178.1 442.3L175.2 444.3L173.3 444.2L173.1 446.8L174.4 447.3L171.5 449.7L169.4 449.0M178.1 442.3L179.4 443.5L179.6 446.8L180.5 448.8L181.9 448.3L183.9 447.8M183.0 441.2L182.0 443.5L182.8 445.3L183.9 447.8M183.9 447.8L184.8 446.8L186.7 447.2M187.4 441.5L186.7 444.3L186.7 447.2M186.7 447.2L188.9 447.3L190.6 444.3M259.2 388.6L259.9 391.8L260.6 394.2L257.4 395.4L257.2 396.9L254.9 398.8L250.2 401.1L250.2 403.8M250.2 403.0L244.0 403.0M250.2 403.8L250.2 406.2L245.7 406.2L245.7 410.9L244.3 411.7L244.3 414.7L238.7 414.7M250.2 403.8L255.6 408.0M255.6 408.0L253.3 408.0L254.0 416.0L254.7 423.5L254.7 424.9L249.1 424.9L247.5 425.6L246.1 425.1L245.4 426.4M239.4 423.9L242.2 423.0L243.9 424.9L245.4 426.4M245.4 426.4L246.3 430.2M246.3 430.2L243.3 429.9L239.1 430.2M239.0 428.2L241.5 427.8L243.2 428.5L241.5 428.8L239.0 429.0M243.3 429.9L243.3 431.4L241.5 432.8M246.3 430.2L249.4 430.4L250.8 431.9L251.2 433.9M243.9 436.0L246.8 434.3L248.0 436.8M248.0 436.8L249.3 438.5L250.6 438.3M250.6 438.3L251.2 433.9M248.0 436.8L246.3 439.5M250.6 438.3L251.9 443.7M251.2 433.9L254.0 433.8L254.7 433.6L258.4 434.8M258.4 434.8L257.9 442.5M254.7 433.6L254.9 431.2L256.5 428.8L259.5 427.1L262.6 425.8M258.4 434.8L258.3 432.6L262.3 432.4L263.5 432.6L265.6 430.4M262.6 425.8L263.7 428.5L265.6 430.4M262.3 432.4L263.0 436.8L264.0 440.8M263.5 432.6L264.5 436.0L264.7 440.7M266.0 440.3L266.0 436.0L267.3 431.4M265.6 430.4L267.3 431.4M267.3 431.4L267.8 428.3L272.0 429.2L274.8 429.5L280.3 428.3L281.0 428.0M262.6 425.8L267.2 425.1L268.1 422.6L268.1 418.4M255.6 408.0L264.0 415.1L264.8 416.5L266.7 417.4L268.1 418.4M268.1 418.4L270.6 417.4L278.9 410.8M278.9 410.8L276.2 408.9L275.5 405.6L276.0 402.5L275.5 398.3M275.5 398.3L274.8 394.8L272.8 392.2L273.8 388.8L274.2 384.9M275.5 398.3L276.6 395.4L278.3 392.6M278.9 410.8L282.0 412.4L283.1 411.7M283.1 411.7L295.6 417.9M297.0 395.6L297.0 413.5M297.0 413.5L297.0 417.0L295.6 417.0L295.6 417.9M297.0 413.5L313.5 413.5M283.1 411.7L284.5 416.5L283.8 422.6L281.0 428.0M281.0 428.0L282.4 429.5M282.0 430.0L280.3 435.1L278.3 439.7L275.9 440.5L274.2 443.0M282.4 429.5L283.2 432.9L281.7 434.3L283.8 438.5M283.8 438.5L288.0 437.5L288.7 436.0L292.1 433.4L294.1 432.8M295.6 417.9L295.6 424.6L293.5 427.5L292.8 429.7L294.1 432.8M294.1 432.8L295.3 436.5L297.3 438.5L300.3 442.3M283.8 438.5L282.4 441.0L282.6 443.5L284.5 447.3M275.9 447.2L278.0 447.3L280.7 447.3L284.5 447.3M275.9 449.3L278.0 449.3L278.0 447.3M280.7 447.3L282.3 448.7L281.7 451.8L282.3 454.3L280.1 454.3L278.3 455.2L277.7 457.5M284.5 447.3L285.2 445.3L288.0 445.2M288.0 445.2L288.1 443.5L292.8 444.0L297.0 442.7L300.3 442.3M288.0 445.2L287.0 450.5L285.2 454.0L284.5 456.8L282.4 459.2L280.3 458.7L279.2 460.7M279.4 461.0L280.9 460.8L285.2 460.8L285.9 463.5L288.7 464.3L292.5 463.2L292.5 469.4L295.6 469.4L295.6 472.8M295.6 472.8L292.8 472.8L292.8 478.3L294.8 480.7M278.7 480.2L281.0 479.7L288.0 480.4L294.8 480.7L297.3 481.1M291.4 482.0L291.4 488.5L290.0 488.5L290.0 493.6M285.2 500.7L286.6 501.1L290.0 500.3L290.0 493.6M290.0 493.6L291.1 497.3L293.6 495.8L297.7 495.3L299.7 491.4L303.1 488.7M303.1 488.7L300.7 485.8L297.4 481.1M297.4 481.1L299.7 481.3L302.4 478.0L304.5 477.3M303.1 488.7L305.7 489.2M304.5 477.3L307.9 479.2L307.8 483.2L307.7 485.8L305.7 489.2M305.7 489.2L306.7 493.1L306.5 495.6L307.9 497.5M299.7 502.6L302.0 500.7L303.1 503.0L301.1 504.5L299.7 502.6M306.5 495.6L305.3 496.4L305.3 498.0L306.8 497.5M295.6 469.4L297.5 469.7L299.6 470.9L301.7 472.0L302.5 473.5L303.6 473.5L303.6 471.3L301.7 470.8L302.0 466.4L305.0 464.9M305.0 464.9L307.9 466.7M307.9 466.7L308.5 469.4L307.7 473.8L308.3 474.5M308.3 474.5L304.5 476.2L304.5 477.3M308.3 474.5L310.2 475.4L311.3 479.4L312.1 476.1L310.7 473.7L310.3 470.4M307.9 466.7L309.5 466.9L310.3 470.4M310.3 470.4L314.3 470.6L318.3 468.6M316.7 458.8L314.6 456.2L309.5 452.7M309.5 452.7L305.0 452.7L304.6 455.0L304.6 456.8L303.1 458.5M303.1 458.5L303.4 461.8L305.0 464.9M305.0 452.7L303.4 453.3L302.5 455.7L303.1 458.5M304.6 455.0L302.5 455.7M309.5 452.7L309.5 450.2L310.8 448.2L309.5 444.0M303.4 453.3L303.8 450.0L305.3 447.3L305.0 445.2M305.0 445.2L306.7 445.0L309.5 444.0M309.5 444.0L312.1 443.3L315.0 445.0L317.1 445.3L319.2 444.5L320.4 444.5M320.4 444.5L319.2 446.3L319.2 452.5L320.0 453.8M320.4 444.5L321.9 443.5L324.7 442.7L328.9 437.7L327.5 437.7L323.3 436.0L321.9 433.4L322.2 431.9M312.1 443.3L310.6 440.2L308.1 437.8L309.5 436.8L309.7 433.3L311.1 430.0L312.6 426.1M312.6 426.1L314.9 425.9L317.8 426.6L321.1 430.0M312.6 426.1L313.6 422.3L315.7 420.6M321.1 430.0L320.3 432.6L322.2 431.9M295.3 436.5L297.0 433.6L301.1 435.1L305.3 434.6L307.4 430.9L308.3 433.1L309.6 435.1M300.3 442.3L303.2 443.7L305.0 445.2M250.1 374.1L250.9 373.7L253.1 374.1L252.7 376.1L252.6 378.9L252.0 384.3M259.8 370.7L263.3 372.1L266.7 373.0M272.7 369.8L272.0 367.0L271.7 364.6M271.7 364.6L270.6 363.9L272.0 361.0L272.8 360.7L273.7 357.2L271.2 356.0L270.3 356.0L268.1 354.7L265.9 351.8M267.0 351.0L269.2 351.0L270.6 352.1M270.6 352.6L270.8 349.9L272.0 348.6L272.3 345.8M270.3 356.0L270.6 352.6M274.2 341.3L276.0 341.6M282.1 344.1L282.6 348.0L283.1 352.1M283.1 352.1L279.2 353.9L281.4 357.7M281.4 357.7L280.3 361.0L275.6 361.0L272.8 360.7M271.7 364.6L274.1 364.6L276.7 363.2L275.6 361.0M276.7 363.2L279.2 362.2L281.3 363.4M281.4 357.7L283.1 357.2L285.9 358.0L286.0 359.8L284.6 362.5L281.3 363.4M281.3 363.4L281.3 365.6M281.3 365.8L283.5 365.8L285.2 363.4L284.6 362.5M285.2 363.4L288.4 364.9M288.4 364.9L288.7 367.2L284.5 366.5L284.2 367.5L286.6 371.6L288.0 372.8M288.7 367.2L289.2 370.5L288.0 372.8M288.4 364.9L290.5 364.4L291.7 363.7L294.1 359.8M286.0 359.8L288.4 360.2L290.7 358.5L293.1 358.8L294.1 359.8M283.1 352.1L285.2 354.2L288.4 356.0L293.5 357.0M293.5 357.0L295.6 353.4L295.0 349.4L294.9 344.1L293.9 342.7L289.5 342.7M285.9 358.0L288.4 356.0M293.1 358.8L293.5 357.0M294.1 359.8L296.8 360.5L299.2 359.0L301.4 363.4L301.4 365.8L303.5 366.3M299.2 359.0L302.5 359.8L303.9 363.7L301.4 365.8M293.8 368.9L297.7 370.0L299.7 369.1L302.0 370.0M290.5 364.4L292.1 367.5L293.8 368.9M293.8 368.9L293.4 373.2M293.4 373.2L294.2 375.4L297.0 375.4L298.8 374.6L301.1 373.9M298.8 374.6L298.4 376.5M290.0 378.9L291.3 376.5L294.2 375.4M289.2 374.1L290.7 373.4L291.3 376.5M290.7 373.4L293.4 373.2M289.2 370.5L290.7 373.4M291.4 337.8L295.6 337.2L299.2 339.0M296.0 332.3L300.3 333.5M301.3 327.5L300.3 333.5M300.3 333.5L301.4 337.5L299.2 339.0M299.2 339.0L297.7 343.3L294.9 344.1M291.4 340.1L293.9 342.7M301.4 337.5L305.3 339.5L307.7 345.6L306.0 349.1M295.0 350.5L299.7 350.7L304.6 351.3L306.0 349.1M306.0 349.1L309.5 348.6L311.5 353.6L315.0 354.9L317.8 355.7L317.5 360.0L315.3 362.0M300.9 323.8L303.9 318.6L306.0 315.4L303.9 309.4L302.5 299.7L303.9 294.9L301.8 290.4L302.4 286.6M302.4 286.6L301.1 285.6L298.4 287.1L297.9 290.4L290.9 289.9M290.9 289.9L295.0 295.3L295.6 303.4L295.9 304.2M290.9 289.9L287.3 292.7L284.5 299.3L282.4 303.4L281.7 309.4L278.9 313.2L279.2 322.1L279.6 325.5L278.3 328.8M302.4 286.6L305.0 287.5M252.2 341.0L251.3 343.0L253.6 343.6M312.2 386.7L313.2 385.1L315.7 385.1L321.1 384.5L324.4 384.3L323.3 379.6L324.4 378.9M319.9 375.0L322.6 375.9L322.9 377.9L324.4 378.9M317.8 370.7L321.9 372.1L326.7 374.1M322.6 375.9L324.7 375.4L326.7 374.1L329.6 374.3M324.7 375.4L326.8 380.7M324.4 378.9L326.8 380.7L328.9 379.4L330.1 381.7M321.1 384.5L319.2 390.0L316.1 392.0M316.1 392.0L312.2 393.4M312.2 387.2L312.9 389.8L312.0 392.2L311.0 392.6M312.9 389.8L312.2 389.6M316.1 392.0L316.7 394.4M316.7 394.4L313.6 395.7L315.0 397.7L312.2 400.2L310.8 399.8M311.7 393.4L311.5 395.7L310.8 399.6M309.7 396.1L310.7 399.6M316.7 394.4L320.6 396.5L324.3 400.2L326.8 400.4M326.8 400.4L328.5 398.5L328.9 398.7M326.8 400.4L329.4 401.5M324.4 384.3L326.1 387.2L325.4 390.8L328.5 395.7L329.6 398.7M321.7 423.3L323.3 421.6L327.5 422.3L330.3 419.5L334.4 418.8M334.4 418.8L338.6 417.0L339.6 413.5L338.9 412.2M334.4 418.8L335.9 423.0M338.9 412.2L335.3 411.9L333.9 409.7M338.9 412.2L339.7 409.5L340.5 408.2M337.1 384.0L341.4 382.2L344.5 383.6L347.2 385.5M347.2 385.5L346.2 390.8L346.9 395.7L346.8 399.0M346.8 399.0L349.4 404.0L350.0 405.1L347.7 407.7M346.8 399.0L354.3 398.8L355.1 396.1L358.4 395.0L359.8 392.0L360.9 390.2L361.5 386.7L366.2 384.7M347.2 385.5L351.8 386.1L354.5 383.8L356.6 384.7L359.4 383.4L361.5 381.9L361.9 385.3L366.2 384.3M356.9 410.4L360.8 409.1L358.7 404.3L362.2 402.5L364.8 397.9L365.6 393.8L367.7 392.8L370.2 387.8M366.2 384.7L370.2 387.8M370.2 387.8L371.9 393.8L371.5 395.7L374.6 398.3M373.4 400.9L374.6 398.3L378.8 400.9L384.5 402.6L384.5 405.4L378.8 403.8L373.4 400.9M385.5 404.0L387.1 401.9L389.9 402.8L389.9 404.5L385.7 404.9L385.5 404.0M384.5 402.6L385.5 404.0M389.9 402.8L392.7 400.6L395.5 399.8L397.3 402.1M385.7 413.8L385.5 409.9L384.5 406.6L386.9 405.8L386.9 407.5L390.5 408.0L388.8 409.9L389.2 411.7L390.3 410.4L390.7 414.7M390.7 413.5L391.7 409.9L393.5 407.7L394.3 405.3L397.3 402.1M397.3 402.1L399.2 403.4L399.2 408.0L397.7 409.9L399.6 413.5L401.3 414.5L402.7 414.9M401.3 414.5L401.1 416.5M401.1 416.5L397.9 419.7L399.5 423.3L398.5 425.8L399.9 430.9L399.3 433.8M401.1 416.5L402.7 421.4L403.9 420.2L406.5 420.0L407.7 423.2L408.8 426.8M408.8 426.8L405.2 427.1L404.3 428.3L405.0 431.4M401.1 440.3L402.4 441.5L403.9 440.7M403.9 412.8L405.2 416.2L407.2 416.3L406.5 417.9L408.6 419.7L411.4 425.8L411.4 426.8M402.7 414.9L403.9 412.8M408.8 426.8L411.4 426.8M411.4 426.8L411.4 430.4L409.3 432.6L407.9 432.8L407.1 433.6M403.9 412.8L407.9 411.3L410.3 412.6L412.1 414.4M384.1 356.7L388.5 363.4L388.5 366.5L394.8 368.9L396.1 372.3L402.4 372.5L407.9 374.8L414.2 372.8L417.4 370.0L417.5 367.0L420.4 367.0L423.2 363.9L428.5 362.9L426.0 360.2L422.6 360.0L424.2 355.2M384.1 356.7L389.9 352.6L398.2 354.7L398.6 349.4L404.1 351.3L404.2 353.4L410.7 355.2L414.9 356.7L420.4 354.2L424.2 355.2M424.2 355.2L428.5 348.9L429.7 346.1L433.7 345.3L437.1 347.2L439.1 354.7L443.6 357.7L449.5 358.8L447.0 367.0L444.0 367.0L444.3 371.6L443.4 373.0M443.4 373.0L439.8 373.9L438.3 374.3L434.7 378.3M438.0 383.0L440.4 381.3M384.1 356.7L381.3 362.0L377.4 361.7L376.7 366.3L373.3 367.0L373.5 373.7M373.5 373.7L369.0 376.1L364.9 378.1L364.5 379.4M364.5 379.4L366.3 383.8M330.4 363.7L327.5 359.3L327.5 354.7L332.8 350.2L338.6 352.1L344.1 352.9L347.6 351.5L346.9 344.1L352.5 342.4L358.0 340.1L361.1 343.3L364.2 343.9L368.8 342.7L373.3 352.6L378.1 352.1L383.5 356.7M335.1 374.3L340.0 375.4L340.0 367.0L343.6 365.6L346.9 368.4L352.3 370.0L354.0 371.6L353.8 373.9L356.6 376.1L358.0 375.2L360.8 373.2L364.2 372.8L365.2 371.2L373.5 373.2M340.0 375.4L341.4 375.4L343.6 372.1L345.5 373.4L348.2 375.9L354.5 383.8M356.6 376.1L360.1 377.9L363.6 377.2M356.3 384.3L357.2 379.4L360.1 377.9M360.1 377.9L364.5 379.4M457.9 455.3L457.9 466.2M414.3 447.7L417.4 449.3L420.3 448.7L422.9 443.8L425.4 444.0" fill="none" stroke="#f6f8f9" stroke-width="0.75" stroke-linejoin="round"/><ellipse cx="190.5" cy="474.3" rx="13.9" ry="17.1" fill="#e0596a" fill-opacity="0.62"/><ellipse cx="190.5" cy="474.3" rx="10.4" ry="12.9" fill="#f0a6b0" fill-opacity="0.45"/><ellipse cx="190.5" cy="474.3" rx="9.5" ry="11.9" fill="#d8152b"/><g transform="translate(190.5 474.3)" fill="none" stroke="#fff" stroke-linecap="round"><ellipse rx="3.8" ry="4.4" stroke-width="1.7"/><path d="M-5.7 -6.5 L-4.4 -5 M5.7 -6.5 L4.4 -5 M-5.7 6.5 L-4.4 5 M5.7 6.5 L4.4 5" stroke-width="1.25"/></g><ellipse cx="293.8" cy="504.8" rx="13.9" ry="17.1" fill="#e0596a" fill-opacity="0.62"/><ellipse cx="293.8" cy="504.8" rx="10.4" ry="12.9" fill="#f0a6b0" fill-opacity="0.45"/><ellipse cx="293.8" cy="504.8" rx="9.5" ry="11.9" fill="#d8152b"/><g transform="translate(293.8 504.8)" fill="none" stroke="#fff" stroke-linecap="round"><ellipse rx="3.8" ry="4.4" stroke-width="1.7"/><path d="M-5.7 -6.5 L-4.4 -5 M5.7 -6.5 L4.4 -5 M-5.7 6.5 L-4.4 5 M5.7 6.5 L4.4 5" stroke-width="1.25"/></g><ellipse cx="409.5" cy="461.3" rx="13.9" ry="17.1" fill="#e0596a" fill-opacity="0.62"/><ellipse cx="409.5" cy="461.3" rx="10.4" ry="12.9" fill="#f0a6b0" fill-opacity="0.45"/><ellipse cx="409.5" cy="461.3" rx="9.5" ry="11.9" fill="#d8152b"/><g transform="translate(409.5 461.3)" fill="none" stroke="#fff" stroke-linecap="round"><ellipse rx="3.8" ry="4.4" stroke-width="1.7"/><path d="M-5.7 -6.5 L-4.4 -5 M5.7 -6.5 L4.4 -5 M-5.7 6.5 L-4.4 5 M5.7 6.5 L4.4 5" stroke-width="1.25"/></g></svg>
<div class="r" style="left:196.1px;top:441.5px;width:32.6px;height:26.3px;background:#fff;border:1.7px solid #1d1d1d;box-sizing:border-box;border-radius:4.5px;"></div>
<div class="r" style="left:299.4px;top:480.3px;width:27.4px;height:17.9px;background:#fff;border:1.7px solid #1d1d1d;box-sizing:border-box;border-radius:4.5px;"></div>
<div class="r" style="left:415.3px;top:420.6px;width:26.4px;height:33.9px;background:#fff;border:1.7px solid #1d1d1d;box-sizing:border-box;border-radius:4.5px;"></div>
<svg class="r" style="left:0;top:0;opacity:0.999;will-change:transform" width="783" height="534" viewBox="0 0 783 534" font-family="Liberation Sans, sans-serif">
<text transform="translate(325.70 32.17) scale(0.813 1)" font-size="9.5" fill="#fff" text-anchor="start">Global Manufacturing Insights</text>
<text transform="translate(708.30 27.25) scale(0.82 1)" font-size="7.4" fill="#fff" text-anchor="middle" font-weight="bold">0</text>
<text transform="translate(737.00 32.36) scale(0.78 1)" font-size="8.6" fill="#fff" text-anchor="start" font-weight="bold">TEST_USER</text>
<text transform="translate(32.40 51.72) scale(0.84 1)" font-size="8.2" fill="#fff" text-anchor="start">YTD</text>
<text transform="translate(132.80 51.72) scale(0.843 1)" font-size="8.2" fill="#fff" text-anchor="start">Material Group</text>
<text transform="translate(233.80 51.14) scale(0.835 1)" font-size="7.1" fill="#fff" text-anchor="start">Engines</text>
<text transform="translate(31.00 77.12) scale(0.844 1)" font-size="8.2" fill="#6cb4ee" text-anchor="start">Standard</text>
<text transform="translate(74.40 77.12) scale(0.835 1)" font-size="8.2" fill="#fff" text-anchor="start">Personalized</text>
<text transform="translate(94.00 105.72) scale(0.84 1)" font-size="8.2" fill="#6fb5ec" text-anchor="start">Planned vs. Actual</text>
<text transform="translate(122.75 147.30) scale(0.785 1)" font-size="45" fill="#e3ecf4">9</text>
<text transform="translate(142.39 147.30) scale(0.785 1)" font-size="45" fill="#e3ecf4">9</text>
<text transform="translate(162.04 147.30) scale(0.785 1)" font-size="45" fill="#e3ecf4">.</text>
<text transform="translate(171.85 147.30) scale(0.785 1)" font-size="45" fill="#e3ecf4">5</text>
<text transform="translate(193.90 144.64) scale(0.8 1)" font-size="10" fill="#e3ecf4" text-anchor="start">%</text>
<text transform="translate(94.00 156.11) scale(0.815 1)" font-size="7.6" fill="#fff" text-anchor="start" stroke="#fff" stroke-width="0.12">Plan: 629040.00</text>
<text transform="translate(94.00 166.88) scale(0.82 1)" font-size="7.8" fill="#fff" text-anchor="start">, YTD</text>
<text transform="translate(217.90 105.72) scale(0.809 1)" font-size="8.2" fill="#6fb5ec" text-anchor="start">DEFECT PER UNIT</text>
<text transform="translate(255.36 147.30) scale(0.81 1)" font-size="45" fill="#f7b450">4</text>
<text transform="translate(275.63 147.30) scale(0.81 1)" font-size="45" fill="#f7b450">3</text>
<text transform="translate(295.90 147.30) scale(0.81 1)" font-size="45" fill="#f7b450">.</text>
<path transform="translate(306.03 147.30) scale(0.01780 -0.02103)" d="M763 0H583V1147Q518 1085 412 1023Q307 961 223 930V1104Q374 1175 487 1276Q600 1377 647 1472H763Z" fill="#f7b450"/>
<text transform="translate(217.90 156.11) scale(0.815 1)" font-size="7.6" fill="#fff" text-anchor="start" stroke="#fff" stroke-width="0.12">Threshold: (C:50-100, A:8-50)</text>
<text transform="translate(217.90 166.88) scale(0.82 1)" font-size="7.8" fill="#fff" text-anchor="start">BRC, YTD</text>
<text transform="translate(340.70 105.72) scale(0.82 1)" font-size="8.2" fill="#6fb5ec" text-anchor="start">DEFECT COUNT</text>
<path transform="translate(371.72 147.30) scale(0.01670 -0.02103)" d="M763 0H583V1147Q518 1085 412 1023Q307 961 223 930V1104Q374 1175 487 1276Q600 1377 647 1472H763Z" fill="#f45a5c"/>
<path transform="translate(390.74 147.30) scale(0.01670 -0.02103)" d="M763 0H583V1147Q518 1085 412 1023Q307 961 223 930V1104Q374 1175 487 1276Q600 1377 647 1472H763Z" fill="#f45a5c"/>
<text transform="translate(409.76 147.30) scale(0.76 1)" font-size="45" fill="#f45a5c">8</text>
<text transform="translate(428.78 147.30) scale(0.76 1)" font-size="45" fill="#f45a5c">7</text>
<text transform="translate(340.70 156.11) scale(0.815 1)" font-size="7.6" fill="#fff" text-anchor="start" stroke="#fff" stroke-width="0.12">Threshold: (C:90-200, A:50-90)</text>
<text transform="translate(340.70 166.88) scale(0.82 1)" font-size="7.8" fill="#fff" text-anchor="start">BRC, YTD</text>
<text transform="translate(464.70 105.72) scale(0.82 1)" font-size="8.2" fill="#6fb5ec" text-anchor="start">BUILD CONFORMANCE</text>
<text transform="translate(482.62 147.30) scale(0.788 1)" font-size="45" fill="#b6d957">6</text>
<text transform="translate(502.34 147.30) scale(0.788 1)" font-size="45" fill="#b6d957">4</text>
<text transform="translate(522.06 147.30) scale(0.788 1)" font-size="45" fill="#b6d957">5</text>
<text transform="translate(541.78 147.30) scale(0.788 1)" font-size="45" fill="#b6d957">5</text>
<text transform="translate(563.80 144.64) scale(0.8 1)" font-size="10" fill="#b6d957" text-anchor="start">%</text>
<text transform="translate(464.70 156.11) scale(0.815 1)" font-size="7.6" fill="#fff" text-anchor="start" stroke="#fff" stroke-width="0.12">Threshold: (C:0-75, A:75-90)</text>
<text transform="translate(464.70 166.88) scale(0.82 1)" font-size="7.8" fill="#fff" text-anchor="start">BRC, YTD</text>
<text transform="translate(588.10 105.72) scale(0.816 1)" font-size="8.2" fill="#6fb5ec" text-anchor="start">SCHEDULE CONFORMANCE</text>
<text transform="translate(616.15 147.30) scale(0.785 1)" font-size="45" fill="#f45a5c">2</text>
<text transform="translate(635.79 147.30) scale(0.785 1)" font-size="45" fill="#f45a5c">6</text>
<text transform="translate(655.44 147.30) scale(0.785 1)" font-size="45" fill="#f45a5c">.</text>
<text transform="translate(665.25 147.30) scale(0.785 1)" font-size="45" fill="#f45a5c">0</text>
<text transform="translate(687.00 144.64) scale(0.8 1)" font-size="10" fill="#f45a5c" text-anchor="start">%</text>
<text transform="translate(588.10 156.11) scale(0.815 1)" font-size="7.6" fill="#fff" text-anchor="start" stroke="#fff" stroke-width="0.12">Threshold: (C:0-75, A:75-90)</text>
<text transform="translate(588.10 166.88) scale(0.82 1)" font-size="7.8" fill="#fff" text-anchor="start">BRC, YTD</text>
<text transform="translate(19.00 208.72) scale(0.8 1)" font-size="8.2" fill="#7db6e4" text-anchor="start">Global</text>
<text transform="translate(40.20 208.72) scale(0.84 1)" font-size="8.2" fill="#333" text-anchor="start">/ ALL</text>
<text transform="translate(521.60 222.73) scale(0.82 1)" font-size="9.4" fill="#555" text-anchor="start">Global Contributors: DEFECT COUNT</text>
<text transform="translate(521.60 245.95) scale(0.83 1)" font-size="8" fill="#666" text-anchor="start">Region</text>
<text transform="translate(761.20 245.95) scale(0.86 1)" font-size="8" fill="#666" text-anchor="end">Actual</text>
<text transform="translate(521.60 266.18) scale(0.86 1)" font-size="7.8" fill="#333" text-anchor="start" font-weight="bold">MP01</text>
<text transform="translate(521.60 280.98) scale(0.845 1)" font-size="7.8" fill="#555" text-anchor="start">AFRICA</text>
<text transform="translate(760.80 273.88) scale(0.86 1)" font-size="7.8" fill="#444" text-anchor="end" font-weight="bold">592</text>
<text transform="translate(521.60 301.13) scale(0.86 1)" font-size="7.8" fill="#333" text-anchor="start" font-weight="bold">MP03</text>
<text transform="translate(521.60 315.93) scale(0.845 1)" font-size="7.8" fill="#555" text-anchor="start">SOUTH AMERICA</text>
<text transform="translate(760.80 308.83) scale(0.86 1)" font-size="7.8" fill="#444" text-anchor="end" font-weight="bold">302</text>
<text transform="translate(521.60 336.08) scale(0.86 1)" font-size="7.8" fill="#333" text-anchor="start" font-weight="bold">MP02</text>
<text transform="translate(521.60 350.88) scale(0.845 1)" font-size="7.8" fill="#555" text-anchor="start">SOUTH EAST ASIA</text>
<text transform="translate(760.80 343.78) scale(0.86 1)" font-size="7.8" fill="#444" text-anchor="end" font-weight="bold">293</text>
<text transform="translate(212.40 449.35) scale(0.8 1)" font-size="7.4" fill="#555" text-anchor="middle">SOUTH</text>
<text transform="translate(212.40 457.35) scale(0.8 1)" font-size="7.4" fill="#555" text-anchor="middle">AMERICA</text>
<text transform="translate(212.40 465.35) scale(0.8 1)" font-size="7.4" fill="#555" text-anchor="middle">302</text>
<text transform="translate(313.10 488.15) scale(0.8 1)" font-size="7.4" fill="#555" text-anchor="middle">AFRICA</text>
<text transform="translate(313.10 495.55) scale(0.8 1)" font-size="7.4" fill="#555" text-anchor="middle">592</text>
<text transform="translate(428.50 427.85) scale(0.8 1)" font-size="7.4" fill="#555" text-anchor="middle">SOUTH</text>
<text transform="translate(428.50 435.85) scale(0.8 1)" font-size="7.4" fill="#555" text-anchor="middle">EAST</text>
<text transform="translate(428.50 443.95) scale(0.8 1)" font-size="7.4" fill="#555" text-anchor="middle">ASIA</text>
<text transform="translate(428.50 452.25) scale(0.8 1)" font-size="7.4" fill="#555" text-anchor="middle">293</text>
</svg>
</div></div>
<div id="fr"></div>
</body></html>
